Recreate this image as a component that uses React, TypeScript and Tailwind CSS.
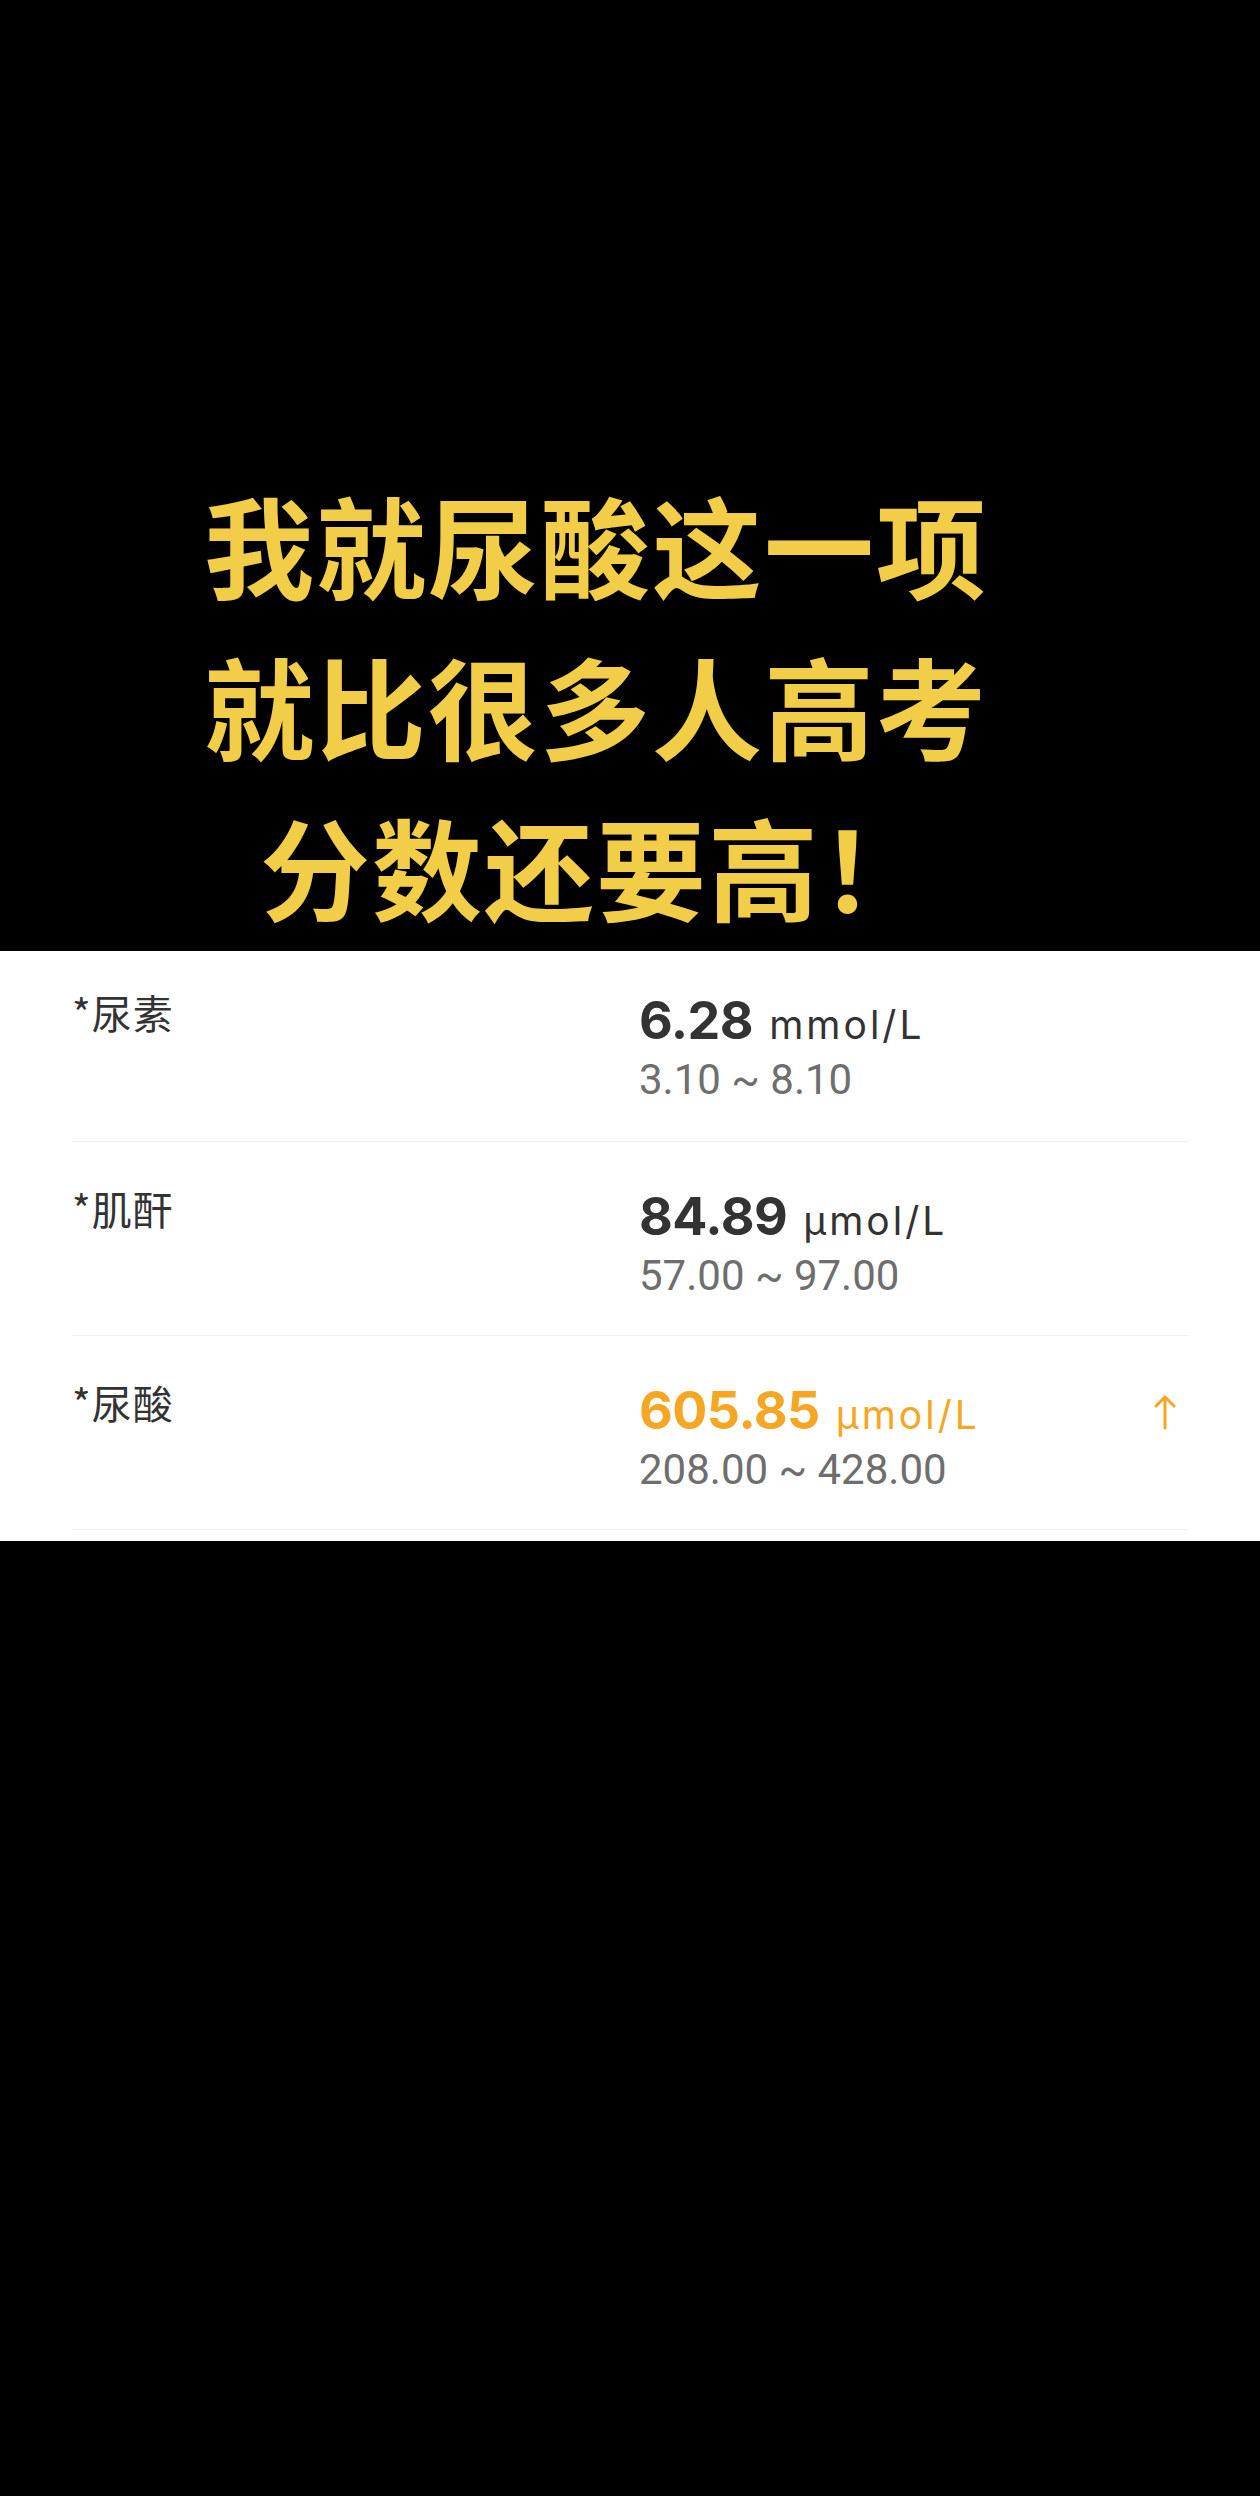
const rows = [
  { name: '*尿素', value: '6.28', unit: 'mmol/L', range: '3.10 ~ 8.10', high: false },
  { name: '*肌酐', value: '84.89', unit: 'µmol/L', range: '57.00 ~ 97.00', high: false },
  { name: '*尿酸', value: '605.85', unit: 'µmol/L', range: '208.00 ~ 428.00', high: true },
];

function UpArrow() {
  return (
    <svg width="22" height="36" viewBox="0 0 22 36" fill="none" className="mt-[4px]">
      <path d="M11 34V3M2 12l9-9 9 9" stroke="#f5a623" strokeWidth="3" strokeLinecap="round" strokeLinejoin="round" />
    </svg>
  );
}

export default function App() {
  return (
    <div className="min-h-[2496px] w-[1260px] bg-black">
      {/* caption over the screenshot */}
      <section className="h-[951px] pt-[463px]">
        <h1
          className="ml-[190px] w-[812px] whitespace-nowrap text-center text-[110px] font-bold leading-[161px] tracking-[2px] text-[#f2cd48]"
          style={{ fontFamily: '"Noto Sans CJK SC", "Noto Sans", sans-serif' }}
        >
          我就尿酸这一项
          <br />
          就比很多人高考
          <br />
          分数还要高！
        </h1>
      </section>

      {/* lab result card */}
      <section className="bg-white px-[72px] pb-[11px]">
        {rows.map((r, i) => (
          <div
            key={r.name}
            className={
              'grid grid-cols-[567px_1fr_auto] border-b border-[#f1f1f1] ' +
              (i === 0 ? 'h-[191px]' : 'h-[194px]')
            }
          >
            <div
              className={'text-[40px] leading-[40px] tracking-[1px] text-[#333] ' + (i === 0 ? 'pt-[41px]' : 'pt-[46px]')}
              style={{ fontFamily: '"Noto Sans CJK SC", sans-serif' }}
            >
              {r.name}
            </div>
            <div className={i === 0 ? 'pt-[44px]' : 'pt-[49px]'}>
              <div
                className={'flex items-baseline leading-[52px] ' + (r.high ? 'text-[#f5a623]' : 'text-[#333]')}
                style={{ fontFamily: 'Inter, sans-serif' }}
              >
                <span className="text-[52px] font-bold tracking-[-0.5px]">{r.value}</span>
                <span className="ml-[16px] text-[39px] tracking-[3px]">{r.unit}</span>
              </div>
              <div
                className="mt-[8px] text-[42px] leading-[42px] text-[#6e6e6e]"
                style={{ fontFamily: 'Roboto, sans-serif' }}
              >
                {r.range}
              </div>
            </div>
            <div className="mr-[12px] pt-[54px]">{r.high && <UpArrow />}</div>
          </div>
        ))}
      </section>
    </div>
  );
}
